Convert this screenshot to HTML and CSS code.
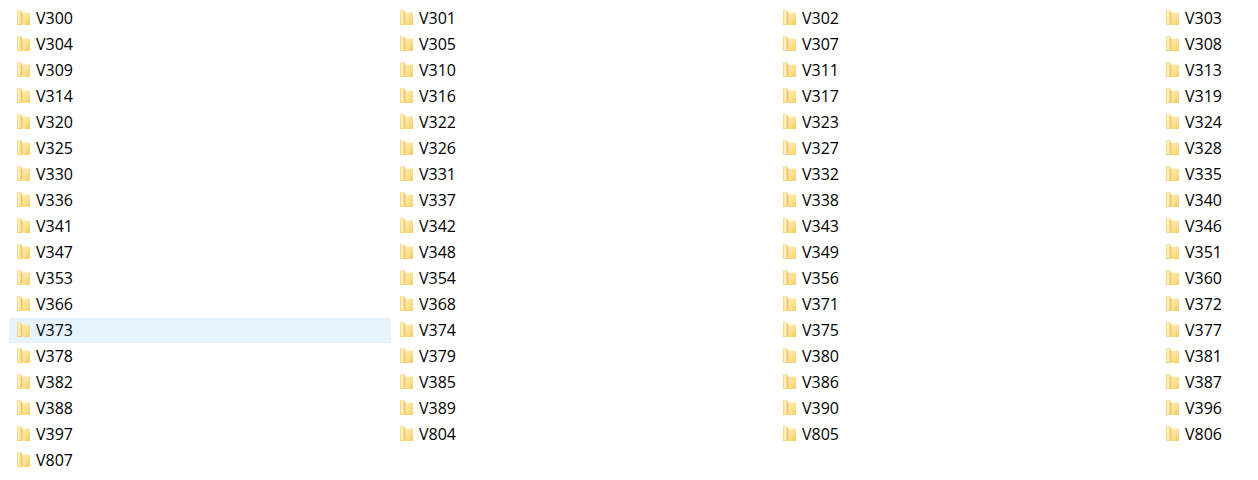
FILE: index.html
```html
<!DOCTYPE html>
<html lang="en">
<head>
  <meta charset="UTF-8" />
  <title>Folders</title>
  <link rel="stylesheet" href="styles.css">
</head>
<body>
  <svg class="defs" width="0" height="0">
    <defs>
      <linearGradient id="folderFront" x1="0" y1="0" x2="1" y2="1">
        <stop offset="0" stop-color="#fff0bd" />
        <stop offset="0.55" stop-color="#fbe08f" />
        <stop offset="1" stop-color="#f3c965" />
      </linearGradient>
      <linearGradient id="folderBack" x1="0" y1="0" x2="0" y2="1">
        <stop offset="0" stop-color="#f8dd94" />
        <stop offset="1" stop-color="#f6d27a" />
      </linearGradient>
      <symbol id="folder" viewBox="0 0 13 15">
        <path d="M0 0h4l1.500 2v13H0z" fill="url(#folderBack)" />
        <path d="M1 .5h2.500V14H1z" fill="#fdeebb" />
        <path d="M4.500 2.500h8.500V15H6.500L4.500 13.500z" fill="url(#folderFront)" />
        <path d="M3.800 1.500l1.700 2V14.500l-1.700-1.500z" fill="#efc768" />
      </symbol>
    </defs>
  </svg>

  <div class="file-list">
    <div class="file-row"><svg class="folder-icon"><use href="#folder" /></svg><span>V300</span></div>
    <div class="file-row"><svg class="folder-icon"><use href="#folder" /></svg><span>V301</span></div>
    <div class="file-row"><svg class="folder-icon"><use href="#folder" /></svg><span>V302</span></div>
    <div class="file-row"><svg class="folder-icon"><use href="#folder" /></svg><span>V303</span></div>
    <div class="file-row"><svg class="folder-icon"><use href="#folder" /></svg><span>V304</span></div>
    <div class="file-row"><svg class="folder-icon"><use href="#folder" /></svg><span>V305</span></div>
    <div class="file-row"><svg class="folder-icon"><use href="#folder" /></svg><span>V307</span></div>
    <div class="file-row"><svg class="folder-icon"><use href="#folder" /></svg><span>V308</span></div>
    <div class="file-row"><svg class="folder-icon"><use href="#folder" /></svg><span>V309</span></div>
    <div class="file-row"><svg class="folder-icon"><use href="#folder" /></svg><span>V310</span></div>
    <div class="file-row"><svg class="folder-icon"><use href="#folder" /></svg><span>V311</span></div>
    <div class="file-row"><svg class="folder-icon"><use href="#folder" /></svg><span>V313</span></div>
    <div class="file-row"><svg class="folder-icon"><use href="#folder" /></svg><span>V314</span></div>
    <div class="file-row"><svg class="folder-icon"><use href="#folder" /></svg><span>V316</span></div>
    <div class="file-row"><svg class="folder-icon"><use href="#folder" /></svg><span>V317</span></div>
    <div class="file-row"><svg class="folder-icon"><use href="#folder" /></svg><span>V319</span></div>
    <div class="file-row"><svg class="folder-icon"><use href="#folder" /></svg><span>V320</span></div>
    <div class="file-row"><svg class="folder-icon"><use href="#folder" /></svg><span>V322</span></div>
    <div class="file-row"><svg class="folder-icon"><use href="#folder" /></svg><span>V323</span></div>
    <div class="file-row"><svg class="folder-icon"><use href="#folder" /></svg><span>V324</span></div>
    <div class="file-row"><svg class="folder-icon"><use href="#folder" /></svg><span>V325</span></div>
    <div class="file-row"><svg class="folder-icon"><use href="#folder" /></svg><span>V326</span></div>
    <div class="file-row"><svg class="folder-icon"><use href="#folder" /></svg><span>V327</span></div>
    <div class="file-row"><svg class="folder-icon"><use href="#folder" /></svg><span>V328</span></div>
    <div class="file-row"><svg class="folder-icon"><use href="#folder" /></svg><span>V330</span></div>
    <div class="file-row"><svg class="folder-icon"><use href="#folder" /></svg><span>V331</span></div>
    <div class="file-row"><svg class="folder-icon"><use href="#folder" /></svg><span>V332</span></div>
    <div class="file-row"><svg class="folder-icon"><use href="#folder" /></svg><span>V335</span></div>
    <div class="file-row"><svg class="folder-icon"><use href="#folder" /></svg><span>V336</span></div>
    <div class="file-row"><svg class="folder-icon"><use href="#folder" /></svg><span>V337</span></div>
    <div class="file-row"><svg class="folder-icon"><use href="#folder" /></svg><span>V338</span></div>
    <div class="file-row"><svg class="folder-icon"><use href="#folder" /></svg><span>V340</span></div>
    <div class="file-row"><svg class="folder-icon"><use href="#folder" /></svg><span>V341</span></div>
    <div class="file-row"><svg class="folder-icon"><use href="#folder" /></svg><span>V342</span></div>
    <div class="file-row"><svg class="folder-icon"><use href="#folder" /></svg><span>V343</span></div>
    <div class="file-row"><svg class="folder-icon"><use href="#folder" /></svg><span>V346</span></div>
    <div class="file-row"><svg class="folder-icon"><use href="#folder" /></svg><span>V347</span></div>
    <div class="file-row"><svg class="folder-icon"><use href="#folder" /></svg><span>V348</span></div>
    <div class="file-row"><svg class="folder-icon"><use href="#folder" /></svg><span>V349</span></div>
    <div class="file-row"><svg class="folder-icon"><use href="#folder" /></svg><span>V351</span></div>
    <div class="file-row"><svg class="folder-icon"><use href="#folder" /></svg><span>V353</span></div>
    <div class="file-row"><svg class="folder-icon"><use href="#folder" /></svg><span>V354</span></div>
    <div class="file-row"><svg class="folder-icon"><use href="#folder" /></svg><span>V356</span></div>
    <div class="file-row"><svg class="folder-icon"><use href="#folder" /></svg><span>V360</span></div>
    <div class="file-row"><svg class="folder-icon"><use href="#folder" /></svg><span>V366</span></div>
    <div class="file-row"><svg class="folder-icon"><use href="#folder" /></svg><span>V368</span></div>
    <div class="file-row"><svg class="folder-icon"><use href="#folder" /></svg><span>V371</span></div>
    <div class="file-row"><svg class="folder-icon"><use href="#folder" /></svg><span>V372</span></div>
    <div class="file-row selected"><svg class="folder-icon"><use href="#folder" /></svg><span>V373</span></div>
    <div class="file-row"><svg class="folder-icon"><use href="#folder" /></svg><span>V374</span></div>
    <div class="file-row"><svg class="folder-icon"><use href="#folder" /></svg><span>V375</span></div>
    <div class="file-row"><svg class="folder-icon"><use href="#folder" /></svg><span>V377</span></div>
    <div class="file-row"><svg class="folder-icon"><use href="#folder" /></svg><span>V378</span></div>
    <div class="file-row"><svg class="folder-icon"><use href="#folder" /></svg><span>V379</span></div>
    <div class="file-row"><svg class="folder-icon"><use href="#folder" /></svg><span>V380</span></div>
    <div class="file-row"><svg class="folder-icon"><use href="#folder" /></svg><span>V381</span></div>
    <div class="file-row"><svg class="folder-icon"><use href="#folder" /></svg><span>V382</span></div>
    <div class="file-row"><svg class="folder-icon"><use href="#folder" /></svg><span>V385</span></div>
    <div class="file-row"><svg class="folder-icon"><use href="#folder" /></svg><span>V386</span></div>
    <div class="file-row"><svg class="folder-icon"><use href="#folder" /></svg><span>V387</span></div>
    <div class="file-row"><svg class="folder-icon"><use href="#folder" /></svg><span>V388</span></div>
    <div class="file-row"><svg class="folder-icon"><use href="#folder" /></svg><span>V389</span></div>
    <div class="file-row"><svg class="folder-icon"><use href="#folder" /></svg><span>V390</span></div>
    <div class="file-row"><svg class="folder-icon"><use href="#folder" /></svg><span>V396</span></div>
    <div class="file-row"><svg class="folder-icon"><use href="#folder" /></svg><span>V397</span></div>
    <div class="file-row"><svg class="folder-icon"><use href="#folder" /></svg><span>V804</span></div>
    <div class="file-row"><svg class="folder-icon"><use href="#folder" /></svg><span>V805</span></div>
    <div class="file-row"><svg class="folder-icon"><use href="#folder" /></svg><span>V806</span></div>
    <div class="file-row"><svg class="folder-icon"><use href="#folder" /></svg><span>V807</span></div>
  </div>
</body>
</html>
```

FILE: styles.css
```css
body {
  margin: 0;
  background: #fff;
  color: #000;
  font-family: "Open Sans", sans-serif;
  font-size: 16px;
}
.defs {
  position: absolute;
}
.file-list {
  display: grid;
  grid-template-columns: repeat(3, 382px) 1fr;
  column-gap: 1px;
  row-gap: 1px;
  padding: 6px 0 0 9px;
}
.file-row {
  display: flex;
  align-items: center;
  box-sizing: border-box;
  height: 25px;
  padding: 0 0 2px 8px;
}
.file-row.selected {
  background: #e5f3ff;
}
.folder-icon {
  width: 13px;
  height: 15px;
  margin-right: 6px;
  flex-shrink: 0;
}
```
